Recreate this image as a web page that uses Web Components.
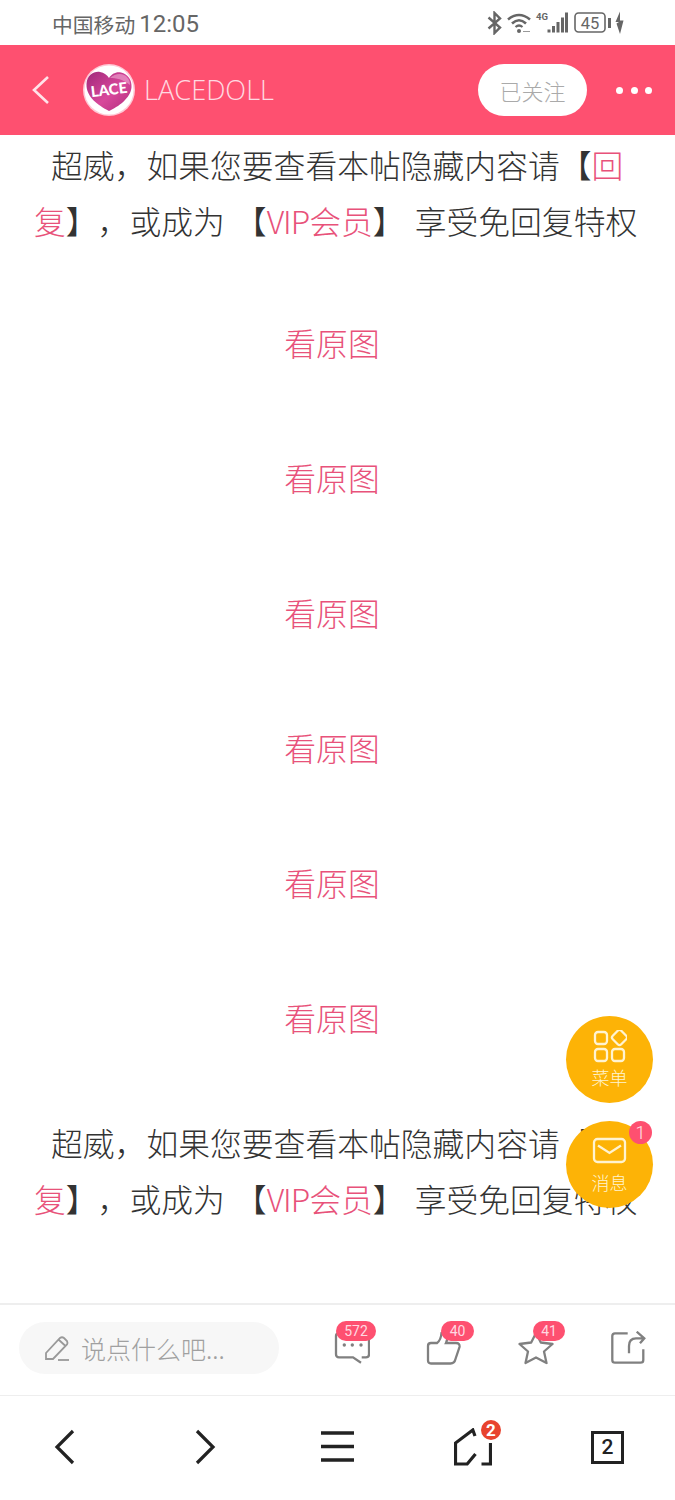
<!DOCTYPE html>
<html lang="zh">
<head>
<meta charset="utf-8">
<title>LACEDOLL</title>
<style>
    html, body {
        margin: 0;
        background: #fff;
        font-family: "Noto Sans CJK SC", "Noto Sans", sans-serif;
    }
</style>
</head>
<body>
<phone-page>
    <status-bar slot="status"></status-bar>
    <app-header slot="header" name="LACEDOLL" follow="已关注"></app-header>
    <post-body slot="body">
        <hidden-notice></hidden-notice>
        <view-original class="first"></view-original>
        <view-original></view-original>
        <view-original></view-original>
        <view-original></view-original>
        <view-original></view-original>
        <view-original></view-original>
        <hidden-notice class="last"></hidden-notice>
    </post-body>
    <float-button slot="float" label="菜单" icon="menu" style="top: 1016px"></float-button>
    <float-button slot="float" label="消息" icon="mail" count="1" style="top: 1121px"></float-button>
    <action-bar slot="actions"></action-bar>
    <browser-nav slot="nav"></browser-nav>
</phone-page>

<script>
class PhonePage extends HTMLElement {

    constructor () {
        super()
        this.root = this.attachShadow({mode: "open"})
    }

    connectedCallback () {
        this.root.innerHTML =
        `
        <style>
            :host {
                display: flex;
                flex-direction: column;
                position: relative;
                width: 675px;
                height: 1500px;
                overflow: hidden;
                background: #fff;
            }
            .body {
                flex: 1;
                min-height: 0;
                overflow: hidden;
            }
        </style>
        <slot name="status"></slot>
        <slot name="header"></slot>
        <div class="body"><slot name="body"></slot></div>
        <slot name="float"></slot>
        <slot name="actions"></slot>
        <slot name="nav"></slot>
        `
    }
}

class StatusBar extends HTMLElement {

    constructor () {
        super()
        this.root = this.attachShadow({mode: "open"})
    }

    connectedCallback () {
        this.root.innerHTML =
        `
        <style>
            :host {
                display: flex;
                align-items: center;
                height: 45px;
                padding: 0 48px 0 52px;
                box-sizing: border-box;
                color: #666;
            }
            .carrier { font-size: 20.8px; margin-top: 2px; }
            .time {
                font-family: Roboto, sans-serif;
                font-size: 24px;
                margin: 2px 0 0 4px;
                flex: 1;
            }
            svg { display: block; }
        </style>
        <span class="carrier">中国移动</span>
        <span class="time">12:05</span>
        <svg width="140" height="24" viewBox="0 0 140 24" fill="none" stroke="#666">
            <path d="M1.5 6.5 L13 16.5 L7.5 22 V2 L13 7.5 L1.5 17.5" stroke-width="2.4"/>
            <path d="M21 8.5 Q32 -0.5 43 8.5" stroke-width="2.6"/>
            <path d="M25 12.5 Q32 6 39 12.5" stroke-width="2.6"/>
            <path d="M28.5 16 Q32 13 35.5 16" stroke-width="2.2"/>
            <circle cx="32" cy="20" r="2" fill="#666" stroke="none"/>
            <path d="M36 20.5 H43" stroke-width="1" stroke="#999"/>
            <text x="49" y="8.5" font-family="Roboto, sans-serif" font-size="9.5" font-weight="700" fill="#666" stroke="none">4G</text>
            <g fill="#666" stroke="none">
                <rect x="60.5" y="18.5" width="3" height="3"/>
                <rect x="65" y="15" width="3" height="6.5"/>
                <rect x="69.5" y="11" width="3" height="10.5"/>
                <rect x="74" y="6.5" width="3" height="15"/>
                <rect x="78" y="1.5" width="3" height="20"/>
            </g>
            <rect x="88" y="2" width="30" height="19" rx="3.5" stroke-width="1.6"/>
            <text x="103" y="18" text-anchor="middle" font-family="Roboto, sans-serif" font-size="16.5" fill="#666" stroke="none">45</text>
            <rect x="121" y="7" width="3" height="10" fill="#666" stroke="none"/>
            <path d="M136 0.5 L131.5 11 H135 L132.5 12.5 L136 23 L139.5 9.5 H136 Z" transform="translate(-3 0)" fill="#666" stroke="none"/>
        </svg>
        `
    }
}

class AppHeader extends HTMLElement {

    constructor () {
        super()
        this.root = this.attachShadow({mode: "open"})
    }

    connectedCallback () {
        this.root.innerHTML =
        `
        <style>
            :host {
                display: flex;
                align-items: center;
                height: 90px;
                background: #fe5070;
                color: #fff;
            }
            .back { margin-left: 32px; display: block; }
            .logo { margin-left: 33px; display: block; }
            .name {
                margin: -2px 0 0 9px;
                flex: 1;
                font-family: "Open Sans", sans-serif;
                font-weight: 300;
                font-size: 27.2px;
                color: #ffd9e1;
            }
            .follow {
                width: 109px;
                height: 52px;
                border-radius: 26px;
                background: #fff;
                color: #aaa;
                font-size: 22px;
                font-weight: 300;
                display: flex;
                align-items: center;
                justify-content: center;
            }
            .more {
                display: flex;
                gap: 7.5px;
                margin: 0 23px 0 29px;
            }
            .more i {
                width: 7px;
                height: 7px;
                border-radius: 50%;
                background: #fff;
            }
        </style>
        <svg class="back" width="18" height="30" viewBox="0 0 18 30" fill="none" stroke="#ffe3e9" stroke-width="2.6">
            <path d="M16 2 L2 15 L16 28"/>
        </svg>
        <svg class="logo" width="52" height="52" viewBox="0 0 52 52">
            <defs>
                <linearGradient id="heart" x1="0" y1="0" x2="1" y2="1">
                    <stop offset="0" stop-color="#a0287a"/>
                    <stop offset=".55" stop-color="#d8489b"/>
                    <stop offset="1" stop-color="#b02c7c"/>
                </linearGradient>
            </defs>
            <circle cx="26" cy="26" r="26" fill="#ffc9d6"/>
            <circle cx="26" cy="26" r="24.5" fill="#fff"/>
            <path d="M26 47 C15 41 3 33 3.500 20 C4 11 11 7 17 8 C21 8.700 24.500 11 26 14 C28.500 10 33 7.500 38 8.500 C45 10 49 16 48.500 23 C48 34 35 43 26 47 Z" fill="url(#heart)"/>
            <path d="M27 14 C31 10 37 9 41 11 C45 13 47 17 47 21 C40 15 33 14 27 14 Z" fill="#e99bc9" opacity=".7"/>
            <text x="26" y="31" text-anchor="middle" transform="rotate(-7 26 26)" font-family="Lato, sans-serif" font-weight="900" font-size="15" fill="#fff">LACE</text>
        </svg>
        <span class="name">${this.getAttribute("name")}</span>
        <span class="follow">${this.getAttribute("follow")}</span>
        <span class="more"><i></i><i></i><i></i></span>
        `
    }
}

class PostBody extends HTMLElement {

    constructor () {
        super()
        this.root = this.attachShadow({mode: "open"})
    }

    connectedCallback () {
        this.root.innerHTML =
        `
        <style>
            :host {
                display: block;
                padding: 1px 34px 0;
                font-size: 31.8px;
                font-weight: 300;
                line-height: 56px;
                color: #333;
                text-spacing-trim: space-all;
                word-spacing: 3px;
            }
        </style>
        <slot></slot>
        `
    }
}

class HiddenNotice extends HTMLElement {

    constructor () {
        super()
        this.root = this.attachShadow({mode: "open"})
    }

    connectedCallback () {
        this.root.innerHTML =
        `
        <style>
            :host {
                display: block;
                text-indent: 17px;
            }
            :host(.last) { margin-top: 30px; }
            a { color: #e8527a; text-decoration: none; }
            .vip { letter-spacing: -1px; }
        </style>
        超威，如果您要查看本帖隐藏内容请【<a>回复</a>】，或成为 【<a><span class="vip">VIP</span>会员</a>】 享受免回复特权
        `
    }
}

class ViewOriginal extends HTMLElement {

    constructor () {
        super()
        this.root = this.attachShadow({mode: "open"})
    }

    connectedCallback () {
        this.root.innerHTML =
        `
        <style>
            :host {
                display: flex;
                align-items: center;
                justify-content: center;
                height: 135px;
                padding-right: 11px;
                color: #e8527a;
            }
            :host(.first) { margin-top: 26px; }
        </style>
        看原图
        `
    }
}

class FloatButton extends HTMLElement {

    static get icons () {
        return {
            menu: `
                <rect x="3" y="2" width="12" height="12" rx="3"/>
                <rect x="21.500" y="1.500" width="12" height="12" rx="2.500" transform="rotate(45 27.500 7.500)"/>
                <rect x="3" y="19" width="12" height="12" rx="3"/>
                <rect x="20" y="19" width="12" height="12" rx="3"/>
            `,
            mail: `
                <rect x="2" y="4" width="31" height="23" rx="3.500"/>
                <path d="M6 10.500 L17.500 18 L29 10.500"/>
            `
        }
    }

    constructor () {
        super()
        this.root = this.attachShadow({mode: "open"})
    }

    connectedCallback () {
        const count = this.getAttribute("count")
        this.root.innerHTML =
        `
        <style>
            :host {
                position: absolute;
                left: 566px;
                display: flex;
                flex-direction: column;
                align-items: center;
                width: 87px;
                height: 87px;
                padding-top: 14px;
                box-sizing: border-box;
                border-radius: 50%;
                background: #fdb306;
                color: #fff3d0;
            }
            svg { display: block; }
            span {
                font-size: 18px;
                font-weight: 300;
                line-height: 24px;
                margin-top: 2px;
            }
            b {
                position: absolute;
                top: 0;
                right: 1px;
                width: 23px;
                height: 23px;
                border-radius: 50%;
                background: #fe5070;
                color: #ffe3e9;
                font-family: Roboto, sans-serif;
                font-size: 18px;
                font-weight: 300;
                line-height: 23px;
                text-align: center;
            }
        </style>
        <svg width="35" height="33" viewBox="0 0 35 33" fill="none" stroke="#fff3d0" stroke-width="2.300">
            ${FloatButton.icons[this.getAttribute("icon")]}
        </svg>
        <span>${this.getAttribute("label")}</span>
        ${count ? `<b>${count}</b>` : ""}
        `
    }
}

class ActionBar extends HTMLElement {

    constructor () {
        super()
        this.root = this.attachShadow({mode: "open"})
    }

    connectedCallback () {
        this.root.innerHTML =
        `
        <style>
            :host {
                display: flex;
                align-items: center;
                height: 93px;
                box-sizing: border-box;
                border-top: 2px solid #eee;
                border-bottom: 1px solid #eee;
                padding: 0 0 5px 19px;
            }
            .input {
                display: flex;
                align-items: center;
                width: 260px;
                height: 52px;
                border-radius: 26px;
                background: #f7f7f7;
                color: #a0a0a0;
                font-size: 25px;
                font-weight: 300;
                margin-right: 27px;
            }
            .input svg { margin: 0 11px 0 25px; display: block; }
            .cell {
                position: relative;
                width: 92px;
                height: 52px;
                display: flex;
                align-items: center;
                justify-content: center;
            }
            .cell svg { display: block; }
            .badge {
                position: absolute;
                top: -1px;
                height: 20px;
                border-radius: 10px;
                background: #fe5070;
                color: #ffd9e1;
                font-family: Roboto, sans-serif;
                font-size: 14px;
                line-height: 20px;
                text-align: center;
            }
        </style>
        <div class="input">
            <svg width="26" height="26" viewBox="0 0 26 26" fill="none" stroke="#999" stroke-width="1.800">
                <path d="M2 18 L16 3 Q18 1.500 20 3 L23 6 Q24 8 23 9.500 L9 24 H2 Z M15 5 L21.500 11"/>
                <path d="M14 25 H25"/>
            </svg>
            说点什么吧...
        </div>
        <div class="cell">
            <svg width="36" height="34" viewBox="0 0 36 34" fill="none" stroke="#808080" stroke-width="2.300">
                <path d="M27.700 26.300 H32 Q35 26.300 35 23.300 V5 Q35 2 32 2 H5 Q2 2 2 5 V23.300 Q2 26.300 5 26.300 H19 L27 31.700"/>
                <g fill="#808080" stroke="none">
                    <circle cx="10.300" cy="14" r="1.700"/>
                    <circle cx="18.300" cy="14" r="1.700"/>
                    <circle cx="27" cy="14" r="1.700"/>
                </g>
            </svg>
            <span class="badge" style="left: 30px; width: 40px">572</span>
        </div>
        <div class="cell">
            <svg width="36" height="34" viewBox="0 0 36 34" fill="none" stroke="#808080" stroke-width="2.300">
                <path d="M2 15 Q2 12 5 12 H11 Q15 9 15.500 2 Q20 0 21.500 5 Q21.500 9 20 12 H30 Q34 12 33.500 16 L29.500 28 Q28.500 32.500 24.500 32.500 H5 Q2 32.500 2 29.500 Z"/>
            </svg>
            <span class="badge" style="left: 43px; width: 33px">40</span>
        </div>
        <div class="cell">
            <svg width="36" height="34" viewBox="0 0 36 34" fill="none" stroke="#808080" stroke-width="2.300">
                <path d="M18 2 L22.800 11.500 L34.500 13 L26 20.500 L28.500 32 L18 26.500 L7.500 32 L10 20.500 L1.500 13 L13.200 11.500 Z" stroke-linejoin="round"/>
            </svg>
            <span class="badge" style="left: 43px; width: 32px">41</span>
        </div>
        <div class="cell">
            <svg width="36" height="34" viewBox="0 0 36 34" fill="none" stroke="#808080" stroke-width="2.300">
                <path d="M17.700 2.300 H5 Q2.300 2.300 2.300 5 V29 Q2.300 31.700 5 31.700 H30.500 Q33.300 31.700 33.300 29 V18.300"/>
                <path d="M19 22.300 V15 Q19 7.300 26 7.300 H33.300 M26.700 0.700 L34.300 7.300 L30 12.300"/>
            </svg>
        </div>
        `
    }
}

class BrowserNav extends HTMLElement {

    constructor () {
        super()
        this.root = this.attachShadow({mode: "open"})
    }

    connectedCallback () {
        this.root.innerHTML =
        `
        <style>
            :host {
                display: grid;
                grid-template-columns: repeat(5, 1fr);
                align-items: center;
                justify-items: center;
                height: 104px;
                padding-bottom: 2px;
                box-sizing: border-box;
            }
            .slot { position: relative; width: 40px; height: 40px; display: flex; align-items: center; justify-content: center; }
            .prev { margin-right: 5px; }
            .next { margin-left: 4px; }
            svg { display: block; }
            .dot {
                position: absolute;
                left: 28.500px;
                top: -7px;
                width: 20px;
                height: 20px;
                border-radius: 50%;
                background: #e8432e;
                color: #fff;
                font-family: Roboto, sans-serif;
                font-weight: 700;
                font-size: 17px;
                line-height: 20px;
                text-align: center;
            }
            .tabs {
                width: 33px;
                height: 33px;
                box-sizing: border-box;
                border: 3px solid #222;
                color: #222;
                font-family: Roboto, sans-serif;
                font-size: 21px;
                font-weight: 500;
                display: flex;
                align-items: center;
                justify-content: center;
            }
        </style>
        <div class="slot prev">
            <svg width="22" height="36" viewBox="0 0 22 36" fill="none" stroke="#222" stroke-width="3.200"><path d="M19 2 L3 18 L19 34"/></svg>
        </div>
        <div class="slot next">
            <svg width="22" height="36" viewBox="0 0 22 36" fill="none" stroke="#222" stroke-width="3.200"><path d="M3 2 L19 18 L3 34"/></svg>
        </div>
        <div class="slot">
            <svg width="34" height="32" viewBox="0 0 34 32" fill="none" stroke="#222" stroke-width="3.400"><path d="M0 2 H33 M0 15.500 H33 M0 29 H33"/></svg>
        </div>
        <div class="slot">
            <svg width="38" height="38" viewBox="0 0 38 38" fill="none" stroke="#222" stroke-width="3.200"><path d="M21 8 L18.800 2 L1.500 15 V36 H13.200 L21.500 26 M36.500 15 V36 H27.500"/></svg>
            <span class="dot">2</span>
        </div>
        <div class="slot">
            <span class="tabs">2</span>
        </div>
        `
    }
}

customElements.define("phone-page", PhonePage)
customElements.define("status-bar", StatusBar)
customElements.define("app-header", AppHeader)
customElements.define("post-body", PostBody)
customElements.define("hidden-notice", HiddenNotice)
customElements.define("view-original", ViewOriginal)
customElements.define("float-button", FloatButton)
customElements.define("action-bar", ActionBar)
customElements.define("browser-nav", BrowserNav)
</script>
</body>
</html>
